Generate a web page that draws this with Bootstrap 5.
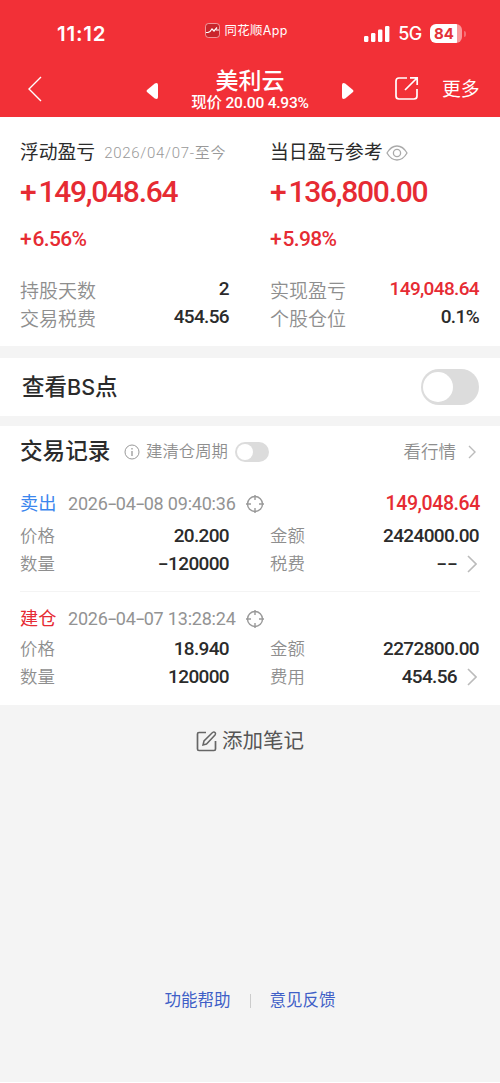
<!DOCTYPE html>
<html lang="zh-CN">
<head>
<meta charset="utf-8">
<meta name="viewport" content="width=device-width, initial-scale=1">
<title>美利云</title>
<link href="https://cdn.jsdelivr.net/npm/bootstrap@5.3.0/dist/css/bootstrap.min.css" rel="stylesheet">
<style>
body{font-family:Roboto,"Noto Sans CJK SC",sans-serif;background:#f4f4f4;color:#2b2b2b;min-height:1083px;font-size:18px;line-height:28px;white-space:nowrap;overflow-x:hidden}
svg{display:block;flex:none}
.top-area{background:#f23037;height:117px}
.status{height:66px;padding:1px 34px 0 57px}
.clock{font:600 20.5px/24px Inter,sans-serif;width:148px;letter-spacing:.8px}
.app-name{font:400 12.4px/18px Inter,"Noto Sans CJK SC",sans-serif;width:141px;letter-spacing:.35px;padding-left:1px}
.net{font:500 18px/24px Inter,sans-serif;width:32px;letter-spacing:-.5px}
.battery{width:32px;height:19px;border-radius:6px;background:linear-gradient(90deg,#fff 27px,#f9989b 27px);color:#e33138;font:700 15px/19px Inter,sans-serif}
.nub{width:2px;height:6px;border-radius:0 2px 2px 0;background:#f66f74;margin-left:2px}
.navrow{height:51px;padding-left:28px;padding-right:20px}
.stock{width:184px;margin-top:-3px}
.stock-name{font-size:23px;line-height:25px;font-weight:500}
.stock-price{font-size:15.5px;line-height:18px;font-weight:500;letter-spacing:-.2px}
.more{font-size:18.8px}
.pair{display:grid;grid-template-columns:209px 209px;column-gap:41px;padding-left:20px}
.summary{height:229px;padding-top:20px}
.sum-title{height:30px;font-size:18.8px;padding-top:2px}
.period{font-size:15px;color:#999;letter-spacing:.72px;font-weight:350}
.red{color:#e62b33!important}
.big{font-size:30px;line-height:36px;font-weight:500;height:50px;padding-top:7px;letter-spacing:-1.25px}
.big span{margin-right:3px}
.pct{font-size:21px;line-height:28px;font-weight:500;height:58px;padding-top:8px;letter-spacing:-.65px}
.pct span{margin-right:1.5px}
.kv{height:28px}
.lab{color:#8e8e8e;font-weight:350}
.summary .lab{font-size:19px;padding-top:3px}
.val{font-size:19px;font-weight:500;letter-spacing:-.65px}
.bs{margin-top:12px;height:58px;padding:1px 21px 0 22px;font:500 22.5px/28px Inter,"Noto Sans CJK SC",sans-serif}
.bs-text{margin-top:-2px}
.bs-latin{font-size:21.5px}
.knob{border-radius:50px;background:#dcdcdc;padding:3px 2px}
.knob::before{content:"";display:block;height:100%;aspect-ratio:1;border-radius:50%;background:#fff}
.knob-lg{width:58px;height:36px;margin-top:-1px}
.knob-sm{width:34px;height:20px;padding:2px}
.records{margin-top:10px;height:279px}
.rec-head{height:52px;padding:0 24px 0 20px}
.rec-title{font-size:22.6px;font-weight:500;width:104px}
.cycle{font-size:16.4px;margin-left:6px;width:89px}
.rec-line{height:32px;padding:0 20px}
.side{font-size:18.2px;width:48px}
.stamp{font-size:18px;color:#939393;font-weight:400;width:177px;letter-spacing:-.2px}
.dash{font-family:Inter,sans-serif;display:inline-block;transform:scaleX(1.25)}
.val .dash{transform:scaleX(1.3);transform-origin:right}
.record .lab{font-size:17.4px}
.record .kv{height:28.3px}
.rec-sep{height:1px;background:#f4f4f4;margin:12px 20px 11px}
.note{height:72px;color:#555;font-size:20.5px}
.foot{margin-top:209px;height:30px;font-size:16.5px}
.foot a{color:#3f5fc7;text-decoration:none}
.foot i{width:1px;height:14px;background:#ccc;margin:0 19px}
.edge{height:1px;background:#fff;margin-top:66px}
</style>
</head>
<body>
<header class="top-area text-white">
  <div class="status d-flex align-items-center">
    <div class="clock">11:12</div>
    <svg width="15" height="15" viewBox="0 0 15 15" class="me-1" fill="none" stroke="#fff" style="margin-top:-7px"><rect x=".5" y=".5" width="14" height="14" rx="3" stroke-opacity=".5" fill="#c9252c"/><path d="M1 9.500h2l2-1 2-2.500 2 2 3-3.500M11 7h3" stroke-width="1.200"/></svg>
    <div class="app-name" style="margin-top:-6px">同花顺App</div>
    <svg width="26" height="16" viewBox="0 0 26 16" fill="#fff"><rect x="0" y="10" width="4.400" height="6" rx="1.200"/><rect x="7" y="7" width="4.400" height="9" rx="1.200"/><rect x="14" y="3.500" width="4.400" height="12.500" rx="1.200"/><rect x="21" y="0" width="4.400" height="16" rx="1.200"/></svg>
    <div class="net ms-2">5G</div>
    <div class="battery text-center pe-1">84</div><div class="nub"></div>
  </div>
  <nav class="navrow d-flex align-items-center">
    <svg width="14" height="26" viewBox="0 0 14 26" fill="none" stroke="#fff" stroke-width="1.400" style="margin-top:-5px;margin-right:104px"><path d="M13 1L1 13l12 12"/></svg>
    <svg width="12" height="18" viewBox="0 0 12 18" fill="#fff" style="margin-top:-1px"><path d="M1 8L8.800 1.500Q12 .2 12 3v12q0 2.800-3.200 1.500L1 10q-1-1 0-2z"/></svg>
    <div class="stock text-center">
      <div class="stock-name">美利云</div>
      <div class="stock-price">现价 20.00 4.93%</div>
    </div>
    <svg width="12" height="18" viewBox="0 0 12 18" fill="#fff" style="margin-top:-1px"><path d="M11 8L3.200 1.500Q0 .2 0 3v12q0 2.800 3.200 1.500L11 10q1-1 0-2z"/></svg>
    <svg width="25" height="25" viewBox="0 0 25 25" fill="none" stroke="#fff" stroke-width="1.700" style="margin:-6px 23px 0 40px"><path d="M13 2H5Q2 2 2 5v15q0 3 3 3h15q3 0 3-3v-7M16 1.800h7.200V9M23 2L11 14"/></svg>
    <div class="more" style="margin-top:-3px">更多</div>
  </nav>
</header>

<section class="summary pair bg-white">
  <div>
    <div class="sum-title d-flex align-items-center"><span>浮动盈亏</span><span class="period" style="margin-left:9px">2026/04/07-至今</span></div>
    <div class="big red"><span>+</span>149,048.64</div>
    <div class="pct red"><span>+</span>6.56%</div>
    <div class="kv d-flex justify-content-between"><span class="lab">持股天数</span><span class="val">2</span></div>
    <div class="kv d-flex justify-content-between"><span class="lab">交易税费</span><span class="val">454.56</span></div>
  </div>
  <div>
    <div class="sum-title d-flex align-items-center"><span>当日盈亏参考</span><svg width="22" height="16" viewBox="0 0 22 16" fill="none" stroke="#aaa" stroke-width="1.300" style="margin-left:3px"><path d="M1 8Q5 1 11 1t10 7Q17 15 11 15T1 8z"/><circle cx="11" cy="8" r="3.600"/></svg></div>
    <div class="big red"><span>+</span>136,800.00</div>
    <div class="pct red"><span>+</span>5.98%</div>
    <div class="kv d-flex justify-content-between"><span class="lab">实现盈亏</span><span class="val red">149,048.64</span></div>
    <div class="kv d-flex justify-content-between"><span class="lab">个股仓位</span><span class="val">0.1%</span></div>
  </div>
</section>

<section class="bs bg-white d-flex align-items-center justify-content-between"><div class="bs-text">查看<span class="bs-latin">BS</span>点</div><div class="knob knob-lg"></div></section>

<section class="records bg-white">
  <div class="rec-head d-flex align-items-center">
    <span class="rec-title">交易记录</span>
    <svg width="16" height="16" viewBox="0 0 16 16" fill="none" stroke="#999"><circle cx="8" cy="8" r="7"/><path d="M8 7v5M8 4v1.500" stroke-width="1.300"/></svg>
    <span class="cycle lab">建清仓周期</span>
    <div class="knob knob-sm"></div>
    <span class="lab ms-auto" style="font-size:17.500px">看行情</span>
    <svg width="8" height="14" viewBox="0 0 8 14" fill="none" stroke="#bbb" stroke-width="1.400" style="margin-left:12px"><path d="M1 1l6 6-6 6"/></svg>
  </div>
  <article class="record">
    <div class="rec-line d-flex align-items-center mt-2" style="height:36px">
      <span class="side" style="color:#3b86ee">卖出</span><span class="stamp">2026<span class="dash">-</span>04<span class="dash">-</span>08 09:40:36</span>
      <svg width="20" height="20" viewBox="0 0 20 20" fill="none" stroke="#999" stroke-width="1.400"><circle cx="10" cy="10" r="7.500"/><path d="M10 1v5M10 14v5M1 10h5M14 10h5"/></svg>
      <span class="val red ms-auto" style="font-size:19.500px;letter-spacing:-.4px">149,048.64</span>
    </div>
    <div class="pair">
      <div class="kv d-flex justify-content-between"><span class="lab">价格</span><span class="val">20.200</span></div>
      <div class="kv d-flex justify-content-between"><span class="lab">金额</span><span class="val">2424000.00</span></div>
      <div class="kv d-flex justify-content-between"><span class="lab">数量</span><span class="val"><span class="dash">-</span>120000</span></div>
      <div class="kv d-flex align-items-center"><span class="lab">税费</span><span class="val ms-auto"><span class="dash">--</span></span><svg width="10" height="18" viewBox="0 0 10 18" fill="none" stroke="#bbb" stroke-width="1.600" style="margin:0 2px 0 10px"><path d="M1 1l8 8-8 8"/></svg></div>
    </div>
  </article>
  <div class="rec-sep"></div>
  <article class="record">
    <div class="rec-line d-flex align-items-center">
      <span class="side red">建仓</span><span class="stamp">2026<span class="dash">-</span>04<span class="dash">-</span>07 13:28:24</span>
      <svg width="20" height="20" viewBox="0 0 20 20" fill="none" stroke="#999" stroke-width="1.400"><circle cx="10" cy="10" r="7.500"/><path d="M10 1v5M10 14v5M1 10h5M14 10h5"/></svg>
    </div>
    <div class="pair">
      <div class="kv d-flex justify-content-between"><span class="lab">价格</span><span class="val">18.940</span></div>
      <div class="kv d-flex justify-content-between"><span class="lab">金额</span><span class="val">2272800.00</span></div>
      <div class="kv d-flex justify-content-between"><span class="lab">数量</span><span class="val">120000</span></div>
      <div class="kv d-flex align-items-center"><span class="lab">费用</span><span class="val ms-auto">454.56</span><svg width="10" height="18" viewBox="0 0 10 18" fill="none" stroke="#bbb" stroke-width="1.600" style="margin:0 2px 0 10px"><path d="M1 1l8 8-8 8"/></svg></div>
    </div>
  </article>
</section>

<div class="note d-flex align-items-center justify-content-center"><svg width="21" height="21" viewBox="0 0 21 21" fill="none" stroke="#666" stroke-width="1.700" style="margin-right:5px"><path d="M10 1.500H3Q1.500 1.500 1.500 3v15q0 1.500 1.500 1.500h15q1.500 0 1.500-1.500v-8"/><path d="M7 14l1-4 8.500-8.500q1.500-1 2.500 0t0 2.500L10.500 13z" stroke-width="1.500"/></svg><span>添加笔记</span></div>
<footer class="foot d-flex align-items-center justify-content-center"><a href="#">功能帮助</a><i></i><a href="#">意见反馈</a></footer>
<div class="edge"></div>
<script src="https://cdn.jsdelivr.net/npm/bootstrap@5.3.0/dist/js/bootstrap.bundle.min.js"></script>
</body>
</html>
